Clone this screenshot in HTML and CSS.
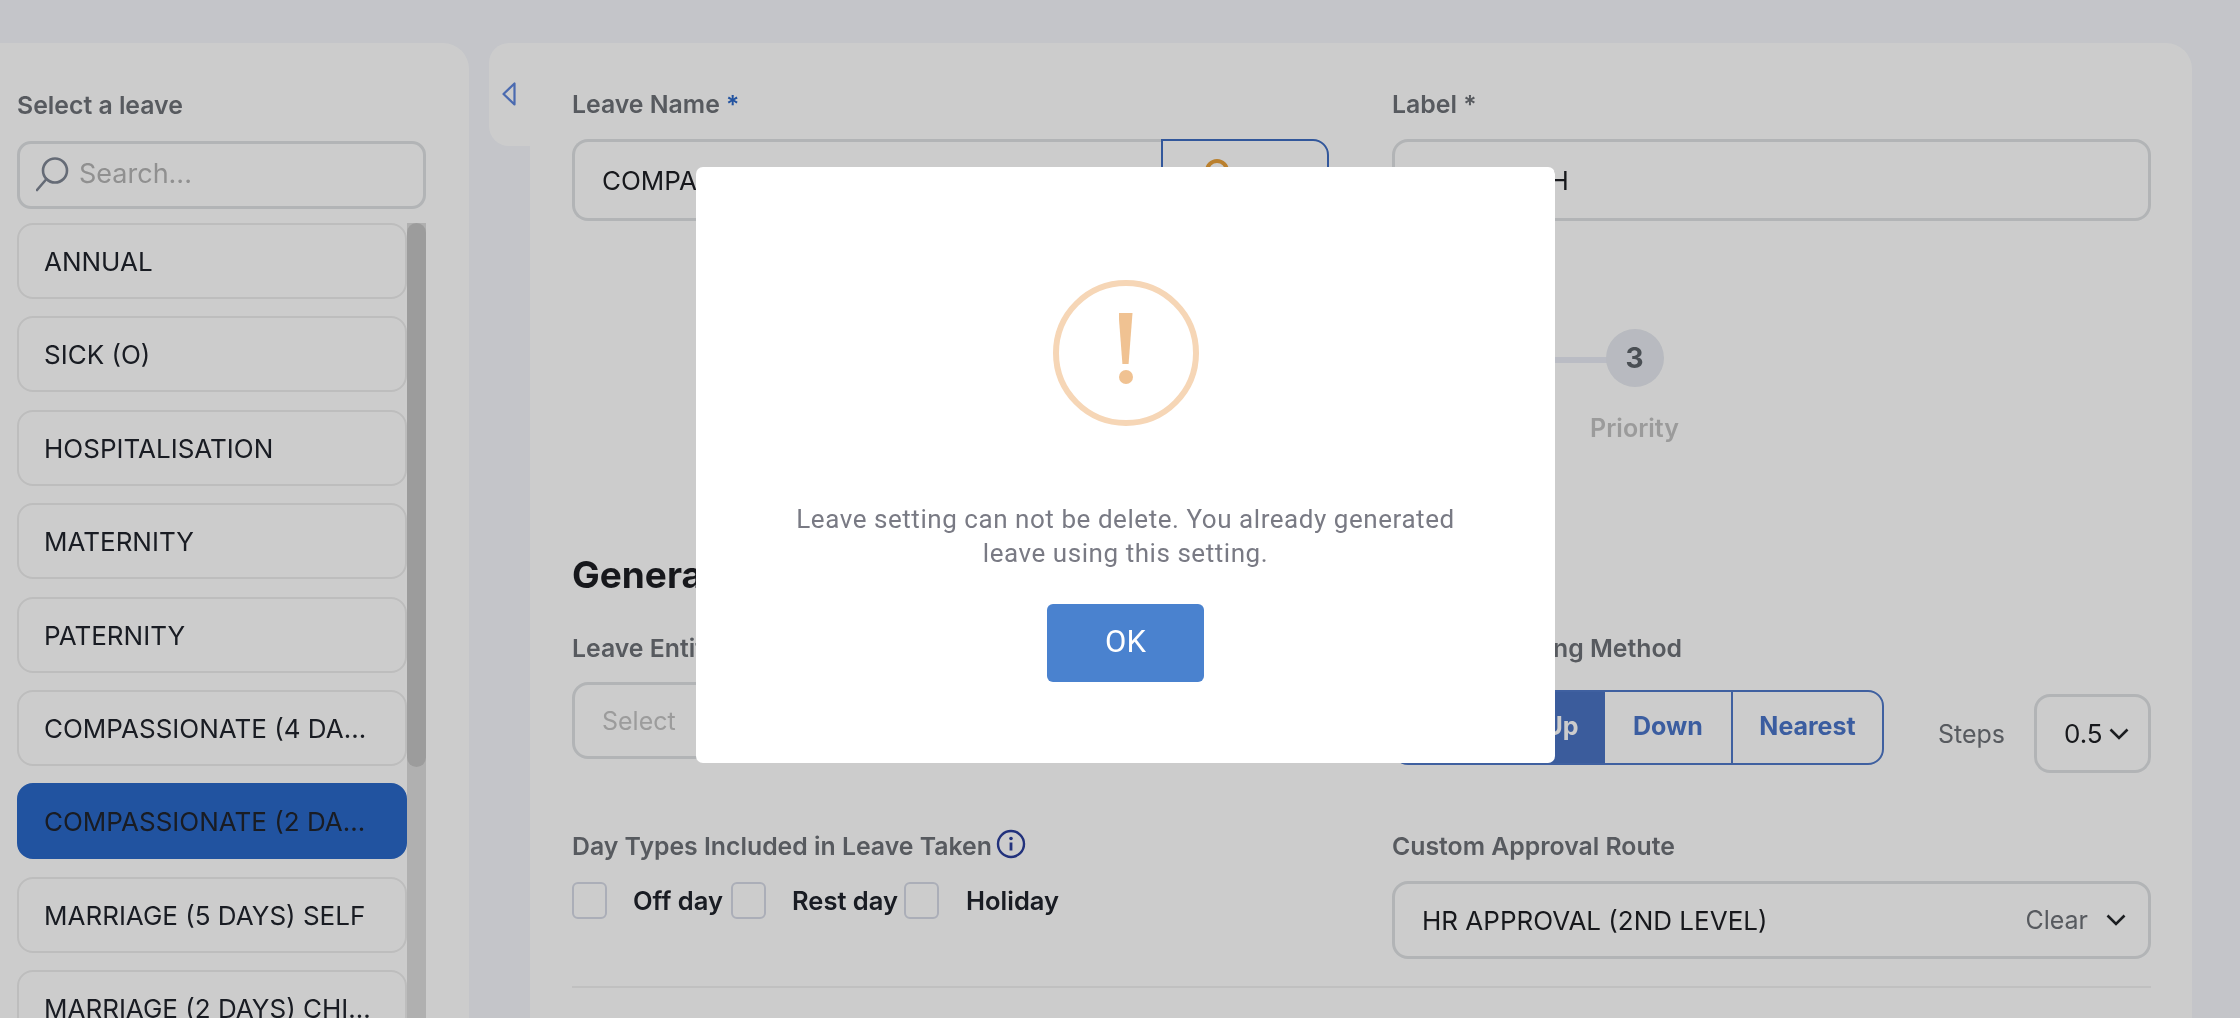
FILE: index.html
```html
<!DOCTYPE html>
<html lang="en">
<head>
<meta charset="utf-8">
<title>Leave settings</title>
<link rel="stylesheet" href="styles.css">
</head>
<body>
<div class="page">
  <aside class="side">
    <div class="side-label">Select a leave</div>
    <div class="search">
      <svg class="search-icon" viewBox="0 0 34 36" fill="none" stroke="#7f8694" stroke-width="2.6"><circle cx="19" cy="13.5" r="12"/><path d="M10.5 22 1 33" stroke-linecap="round"/></svg>
      <span class="search-text">Search...</span>
    </div>
    <div class="list-wrap">
      <ul class="list">
        <li class="item">ANNUAL</li>
        <li class="item">SICK (O)</li>
        <li class="item">HOSPITALISATION</li>
        <li class="item">MATERNITY</li>
        <li class="item">PATERNITY</li>
        <li class="item">COMPASSIONATE (4 DA...</li>
        <li class="item item-on">COMPASSIONATE (2 DA...</li>
        <li class="item">MARRIAGE (5 DAYS) SELF</li>
        <li class="item">MARRIAGE (2 DAYS) CHI...</li>
      </ul>
      <div class="track"><div class="thumb"></div></div>
    </div>
  </aside>
  <div class="tab">
    <svg class="tab-icon" viewBox="0 0 14 24" fill="none" stroke="#5d85dc" stroke-width="2.2" stroke-linejoin="round"><path d="M12.5 1.5v21L1.5 12z"/></svg>
  </div>
  <main class="main">
    <div class="row row-top">
      <div class="col">
        <div class="label">Leave Name <span class="star">*</span></div>
        <div class="name-row">
          <div class="input input-name"><span class="val">COMPASSIONATE</span></div>
          <div class="key-btn">
            <svg class="key-icon" viewBox="0 0 30 30" fill="none" stroke="#e9a13a" stroke-width="4"><circle cx="15" cy="13" r="10"/></svg>
          </div>
        </div>
      </div>
      <div class="col">
        <div class="label">Label *</div>
        <div class="input"><span class="val">COMPAS2H</span></div>
      </div>
    </div>

    <div class="stepper">
      <div class="step-line"></div>
      <div class="step">
        <div class="step-num">3</div>
        <div class="step-name">Priority</div>
      </div>
    </div>

    <h2 class="heading">General Settings</h2>

    <div class="row row-gen">
      <div class="col">
        <div class="label">Leave Entitlement</div>
        <div class="input input-select"><span class="placeholder">Select</span></div>
      </div>
      <div class="col">
        <div class="label">Leave Rounding Method</div>
        <div class="round-row">
          <div class="seg">
            <div class="seg-btn seg-up">Up</div>
            <div class="seg-btn seg-down">Down</div>
            <div class="seg-btn seg-near">Nearest</div>
          </div>
          <span class="steps-text">Steps</span>
          <div class="steps-box">
            <span>0.5</span>
            <svg class="chev" viewBox="0 0 20 12" fill="none" stroke="#23262a" stroke-width="2.6"><path d="M1.5 1.5 10 10l8.500-8.500"/></svg>
          </div>
        </div>
      </div>
    </div>

    <div class="row row-day">
      <div class="col">
        <div class="label label-info">Day Types Included in Leave Taken
          <svg class="info" viewBox="0 0 30 30" fill="none"><circle cx="15" cy="15" r="13" stroke="#2b3f9c" stroke-width="2.4"/><circle cx="15" cy="9.500" r="1.800" fill="#2b3f9c"/><path d="M15 13.500v8" stroke="#2b3f9c" stroke-width="2.800"/></svg>
        </div>
        <div class="checks">
          <span class="box"></span><span class="check-text check-off">Off day</span>
          <span class="box"></span><span class="check-text check-rest">Rest day</span>
          <span class="box"></span><span class="check-text check-hol">Holiday</span>
        </div>
      </div>
      <div class="col">
        <div class="label">Custom Approval Route</div>
        <div class="input input-route">
          <span class="val val-route">HR APPROVAL (2ND LEVEL)</span>
          <span class="clear">Clear</span>
          <svg class="chev chev-route" viewBox="0 0 20 12" fill="none" stroke="#23262a" stroke-width="2.6"><path d="M1.500 1.500 10 10l8.500-8.500"/></svg>
        </div>
      </div>
    </div>
    <div class="divider"></div>
  </main>
</div>

<div class="overlay">
  <div class="modal">
    <div class="warn">
      <span class="warn-bar"></span>
      <span class="warn-dot"></span>
    </div>
    <p class="msg">Leave setting can not be delete. You already generated<br>leave using this setting.</p>
    <button class="ok">OK</button>
  </div>
</div>
</body>
</html>
```
FILE: styles.css
```css
* { box-sizing: border-box; }
html, body { margin: 0; height: 100%; }
body {
  width: 2240px;
  height: 1018px;
  overflow: hidden;
  background: #f5f7fc;
  font-family: Inter, "Liberation Sans", sans-serif;
  color: #1d1f24;
}
.page {
  display: flex;
  align-items: flex-start;
  height: 1018px;
  padding-top: 43px;
  filter: blur(.45px);
}

/* left column */
.side {
  width: 469px;
  height: 975px;
  flex: none;
  background: #fff;
  border-radius: 0 26px 0 0;
  padding: 48px 43px 0 17px;
  overflow: hidden;
}
.side-label, .label {
  font-size: 24.8px;
  font-weight: 600;
  color: #6d7177;
  line-height: 28px;
  white-space: nowrap;
}
.search {
  margin-top: 22px;
  height: 68px;
  border: 3px solid #dfe2e4;
  border-radius: 14px;
  display: flex;
  align-items: center;
  padding-left: 16px;
  gap: 9px;
}
.search-icon { width: 34px; height: 36px; flex: none; }
.search-text { font-size: 27px; color: #b4b4b4; margin-top: -4px; }
.list-wrap {
  display: flex;
  margin-top: 14px;
  height: 800px;
  overflow: hidden;
}
.list {
  list-style: none;
  margin: 0;
  padding: 0;
  width: 390px;
  flex: none;
  display: flex;
  flex-direction: column;
  gap: 17.4px;
}
.item {
  height: 76px;
  flex: none;
  border: 2px solid #ededed;
  border-radius: 16px;
  padding-left: 25px;
  font-size: 26px;
  line-height: 73px;
  color: #20242c;
  white-space: nowrap;
}
.item-on {
  background: #2a68c9;
  border-color: #2a68c9;
}
.track {
  width: 20px;
  background: #dcdcdc;
}
.thumb {
  height: 544px;
  background: #c4c4c4;
  border-radius: 10px;
}

/* collapse tab */
.tab {
  margin-left: 20px;
  width: 41px;
  height: 103px;
  flex: none;
  background: #fff;
  border-radius: 20px 0 0 20px;
  padding: 39px 0 0 13px;
}
.tab-icon { display: block; width: 14px; height: 24px; }

/* main panel */
.main {
  width: 1662px;
  height: 975px;
  flex: none;
  background: #fff;
  border-radius: 0 26px 0 0;
  padding: 47px 41px 0 42px;
  overflow: hidden;
}
.row {
  display: grid;
  grid-template-columns: 757px 759px;
  column-gap: 63px;
}
.input {
  height: 82px;
  border: 3px solid #dfe2e4;
  border-radius: 16px;
  display: flex;
  align-items: center;
  padding-left: 27px;
  margin-top: 21px;
}
.star { color: #2b68c9; }
.val { font-size: 26px; color: #1d1f24; white-space: nowrap; }
.name-row { display: flex; margin-top: 21px; }
.input-name {
  margin-top: 0;
  flex: none;
  width: 589px;
  border-right: 0;
  border-radius: 16px 0 0 16px;
}
.key-btn {
  flex: none;
  width: 168px;
  height: 82px;
  border: 2px solid #3f6dc2;
  border-radius: 0 16px 16px 0;
  padding: 17px 0 0 39px;
}
.key-icon { display: block; width: 30px; height: 30px; }

/* stepper */
.stepper {
  position: relative;
  height: 223px;
  margin-top: 108px;
}
.step-line {
  position: absolute;
  left: 900px;
  width: 140px;
  top: 28px;
  height: 6px;
  background: #e9ebf5;
}
.step {
  position: absolute;
  left: 987.500px;
  top: 0;
  width: 150px;
  display: flex;
  flex-direction: column;
  align-items: center;
}
.step-num {
  width: 58px;
  height: 58px;
  border-radius: 50%;
  background: #e6e9f0;
  font-size: 28px;
  font-weight: 700;
  line-height: 58px;
  text-align: center;
  color: #5d6369;
}
.step-name {
  margin-top: 26px;
  font-size: 25px;
  font-weight: 600;
  color: #c2c2c2;
}

/* general */
.heading {
  margin: 0;
  font-size: 37px;
  font-weight: 700;
  line-height: 46px;
  color: #1d1f24;
  white-space: nowrap;
}
.row-gen { margin-top: 36px; }
.input-select { height: 77px; margin-top: 20px; }
.placeholder { font-size: 25px; color: #c4c4c4; }
.round-row { display: flex; align-items: flex-start; margin-top: 28px; }
.seg {
  display: flex;
  width: 492px;
  height: 75px;
  border: 2px solid #4f79c8;
  border-radius: 16px;
  overflow: hidden;
  flex: none;
}
.seg-btn {
  font-size: 25px;
  font-weight: 700;
  line-height: 68px;
  text-align: center;
  color: #4a75c8;
}
.seg-up { width: 211px; background: #4a73c4; color: #fff; padding-left: 124px; }
.seg-down { width: 128px; border-right: 2px solid #4f79c8; }
.seg-near { flex: 1; }
.steps-text { margin: 29px 0 0 54px; font-size: 25px; color: #6d7177; line-height: 30px; }
.steps-box {
  flex: none;
  margin: 4px 0 0 auto;
  width: 117px;
  height: 79px;
  border: 3px solid #dfe2e4;
  border-radius: 16px;
  display: flex;
  align-items: center;
  padding-left: 27px;
  gap: 6px;
  font-size: 26px;
}
.chev { width: 20px; height: 12px; flex: none; }

/* day types */
.row-day { margin-top: 59px; }
.label-info { display: flex; align-items: flex-start; gap: 4px; }
.info { width: 30px; height: 30px; margin-top: -3px; flex: none; }
.checks { display: flex; align-items: center; margin-top: 22px; height: 37px; }
.box {
  width: 35px;
  height: 37px;
  flex: none;
  border: 2px solid #d6dae6;
  border-radius: 6px;
}
.check-text { font-size: 25.5px; font-weight: 600; color: #20242c; white-space: nowrap; }
.check-off { margin: 0 0 0 26px; width: 98px; }
.check-rest { margin: 0 0 0 26px; width: 112px; }
.check-hol { margin: 0 0 0 27px; }
.input-route { height: 78px; margin-top: 21px; }
.val-route { flex: 1; }
.clear { font-size: 25px; color: #6d7177; }
.chev-route { margin: 0 22px 0 18px; }
.divider { margin-top: 27px; height: 2px; background: #f0f0f0; }

/* modal */
.overlay {
  position: fixed;
  inset: 0;
  background: rgba(0, 0, 0, .2);
  display: flex;
  align-items: flex-start;
  justify-content: flex-start;
  padding: 167px 0 0 696px;
}
.modal {
  width: 859px;
  height: 596px;
  background: #fff;
  border-radius: 7px;
  padding-top: 113px;
  display: flex;
  flex-direction: column;
  align-items: center;
  filter: blur(.3px);
}
.warn {
  position: relative;
  width: 146px;
  height: 146px;
  border: 6px solid #f6d6b6;
  border-radius: 50%;
  flex: none;
}
.warn-bar {
  position: absolute;
  left: 60px;
  top: 27px;
  width: 14px;
  height: 51px;
  background: #f0c292;
  clip-path: polygon(0 0, 100% 0, 72% 100%, 28% 100%);
}
.warn-dot {
  position: absolute;
  left: 60px;
  top: 84px;
  width: 14px;
  height: 14px;
  border-radius: 50%;
  background: #f0c292;
}
.msg {
  margin: 76px 0 0;
  font-family: Roboto, "Liberation Sans", sans-serif;
  font-size: 26px;
  line-height: 34px;
  letter-spacing: .55px;
  text-align: center;
  color: #797a84;
}
.ok {
  margin-top: 34px;
  width: 157px;
  height: 78px;
  border: 0;
  border-radius: 6px;
  background: #4a82cf;
  color: #fff;
  font-family: Roboto, "Liberation Sans", sans-serif;
  font-size: 31px;
  padding: 0 0 4px;
}
```
